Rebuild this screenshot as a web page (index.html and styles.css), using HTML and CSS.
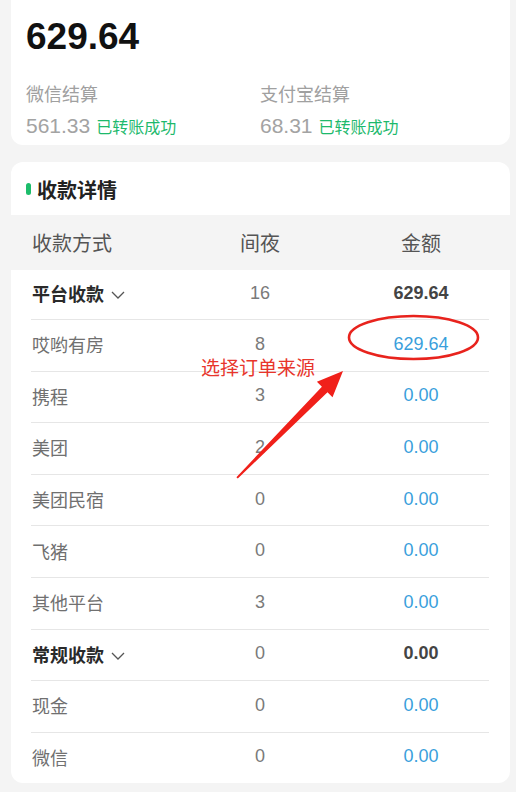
FILE: index.html
```html
<!DOCTYPE html>
<html lang="zh-CN">
<head>
<meta charset="utf-8">
<title>收款详情</title>
<link rel="stylesheet" href="styles.css">
</head>
<body>
<section class="card summary">
  <div class="total">629.64</div>
  <div class="settle">
    <div class="settle-item">
      <div class="settle-label">微信结算</div>
      <div class="settle-value"><span class="num">561.33</span><span class="ok">已转账成功</span></div>
    </div>
    <div class="settle-item">
      <div class="settle-label">支付宝结算</div>
      <div class="settle-value"><span class="num">68.31</span><span class="ok">已转账成功</span></div>
    </div>
  </div>
</section>

<section class="card detail">
  <div class="detail-title"><span class="pill"></span>收款详情</div>
  <div class="thead">
    <span class="c-name">收款方式</span><span class="c-count">间夜</span><span class="c-amt">金额</span>
  </div>
  <div class="tbody">
    <div class="row group"><span class="c-name">平台收款<svg class="chev" width="14" height="8" viewBox="0 0 14 8"><path d="M1 1 L7 7 L13 1" fill="none" stroke="#555" stroke-width="1.3"/></svg></span><span class="c-count">16</span><span class="c-amt">629.64</span></div>
    <div class="row"><span class="c-name">哎哟有房</span><span class="c-count">8</span><span class="c-amt">629.64</span></div>
    <div class="row"><span class="c-name">携程</span><span class="c-count">3</span><span class="c-amt">0.00</span></div>
    <div class="row"><span class="c-name">美团</span><span class="c-count">2</span><span class="c-amt">0.00</span></div>
    <div class="row"><span class="c-name">美团民宿</span><span class="c-count">0</span><span class="c-amt">0.00</span></div>
    <div class="row"><span class="c-name">飞猪</span><span class="c-count">0</span><span class="c-amt">0.00</span></div>
    <div class="row"><span class="c-name">其他平台</span><span class="c-count">3</span><span class="c-amt">0.00</span></div>
    <div class="row group"><span class="c-name">常规收款<svg class="chev" width="14" height="8" viewBox="0 0 14 8"><path d="M1 1 L7 7 L13 1" fill="none" stroke="#555" stroke-width="1.3"/></svg></span><span class="c-count">0</span><span class="c-amt">0.00</span></div>
    <div class="row"><span class="c-name">现金</span><span class="c-count">0</span><span class="c-amt">0.00</span></div>
    <div class="row"><span class="c-name">微信</span><span class="c-count">0</span><span class="c-amt">0.00</span></div>
  </div>
</section>

<div class="annot">
  <svg class="annot-svg" width="516" height="792" viewBox="0 0 516 792">
    <ellipse cx="413.5" cy="337.5" rx="64.5" ry="21.5" fill="none" stroke="#e8231d" stroke-width="2.6"/>
    <polygon points="343,371 332.5,397.2 327.5,392.3 237.8,478.6 236.4,477.2 321.9,386.7 316.9,381.8" fill="#f0201a"/>
  </svg>
  <div class="annot-text">选择订单来源</div>
</div>
</body>
</html>
```

FILE: styles.css
```css
* { box-sizing: border-box; }
html, body { margin: 0; padding: 0; }
body {
  background: #f4f4f4;
  font-family: "Liberation Sans", "Noto Sans CJK SC", sans-serif;
  width: 516px;
  height: 792px;
  overflow: hidden;
  position: relative;
}
.card {
  background: #fff;
  margin: 0 6px 0 11px;
  border-radius: 12px;
}
.summary {
  border-top-left-radius: 0;
  border-top-right-radius: 0;
  padding: 17px 15px 4px 15px;
}
.total {
  font-size: 37px;
  font-weight: bold;
  line-height: 40px;
  color: #111;
}
.settle {
  display: grid;
  grid-template-columns: 234px 1fr;
  margin-top: 25.5px;
}
.settle-label {
  font-size: 18px;
  line-height: 24px;
  color: #a0a0a0;
}
.settle-value {
  margin-top: 6px;
  line-height: 26px;
  display: flex;
  align-items: baseline;
}
.settle-value .num {
  font-size: 21px;
  color: #a3a3a3;
}
.settle-value .ok {
  font-size: 16px;
  color: #1db96c;
  margin-left: 6px;
}
.detail {
  margin-top: 17px;
  overflow: hidden;
}
.detail-title {
  height: 53px;
  display: flex;
  align-items: center;
  padding: 2px 0 0 15px;
  font-size: 20px;
  font-weight: bold;
  color: #222;
}
.pill {
  width: 5px;
  height: 12px;
  border-radius: 3px;
  background: #1cbd6b;
  margin-right: 6px;
}
.thead, .row {
  display: grid;
  grid-template-columns: 136px 186px 136px;
  align-items: center;
}
.thead {
  background: #f4f4f4;
  height: 55px;
  padding: 0 21px 0 20px;
  font-size: 20px;
  color: #555;
}
.tbody {
  padding: 0 21px 0 20px;
}
.row {
  height: 51.6px;
  border-bottom: 1px solid #e6e6e6;
  font-size: 18px;
  line-height: 24px;
}
.row:first-child { height: 50.5px; }
.row:last-child { border-bottom: none; height: 50px; }
.c-name { padding-left: 1px; color: #707070; display: flex; align-items: center; }
.thead .c-name { color: #555; }
.c-count { text-align: center; color: #7a7a7a; margin-top: -3px; }
.thead .c-count, .thead .c-amt { margin-top: 0; color: #555; }
.c-amt { text-align: center; color: #3a9fdc; margin-top: -3px; }
.row .c-name { padding-top: 2px; }
.group .c-name { font-weight: bold; color: #2a2a2a; }
.group .c-amt { font-weight: bold; color: #444; }
.chev { margin-left: 7px; }
.annot {
  position: absolute;
  left: 0;
  top: 0;
  width: 516px;
  height: 792px;
  pointer-events: none;
}
.annot-svg { position: absolute; left: 0; top: 0; }
.annot-text {
  position: absolute;
  left: 201px;
  top: 354px;
  font-size: 19px;
  line-height: 26px;
  color: #e8352b;
  font-family: "Noto Sans CJK SC", sans-serif;
}
```
